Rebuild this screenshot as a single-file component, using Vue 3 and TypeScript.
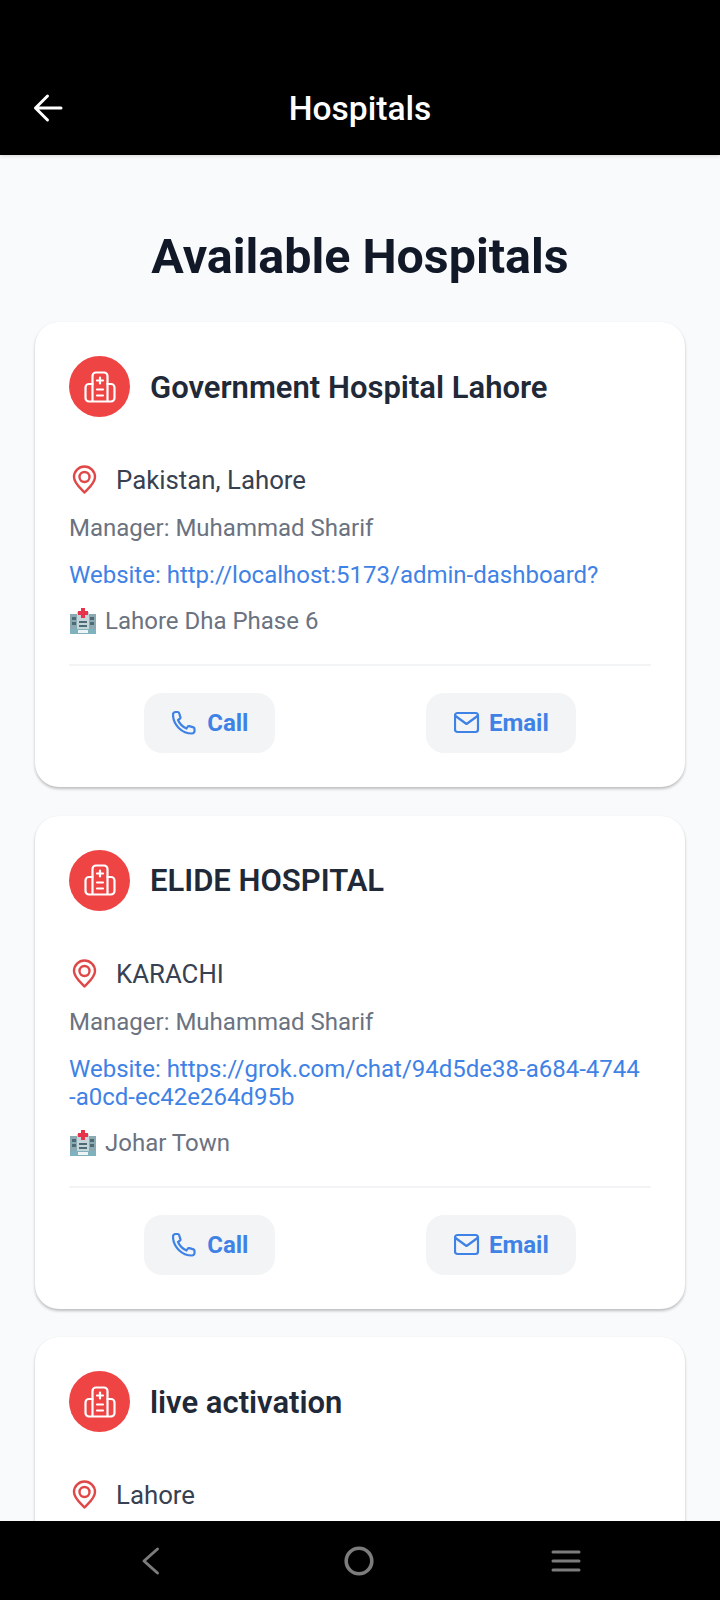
<template>
  <div class="screen">
    <header class="app-bar">
      <button class="back" aria-label="Back">
        <svg width="32" height="32" viewBox="0 0 32 32" fill="none" stroke="#fff" stroke-width="3" stroke-linecap="round" stroke-linejoin="round">
          <path d="M29 16H3.500M15.500 4 3.500 16l12 12" />
        </svg>
      </button>
      <h1 class="bar-title">Hospitals</h1>
    </header>

    <main class="content">
      <h2 class="page-title">Available Hospitals</h2>

      <article v-for="h in hospitals" :key="h.name" class="card">
        <div class="card-head">
          <div class="avatar">
            <svg width="34" height="34" viewBox="0 0 34 34" fill="none" stroke="#fff" stroke-width="2.200" stroke-linecap="round" stroke-linejoin="round">
              <path d="M9.500 31V6A3.500 3.500 0 0 1 13 2.500h8A3.500 3.500 0 0 1 24.500 6v25" />
              <path d="M9.500 14H6a3.500 3.500 0 0 0-3.500 3.500V28A3.500 3.500 0 0 0 6 31.500h22a3.500 3.500 0 0 0 3.500-3.500V17.500A3.500 3.500 0 0 0 28 14h-3.500" />
              <path d="M17 7.500v6M14 10.500h6M14 19.500h6M14 25.500h6" />
            </svg>
          </div>
          <h3 class="name">{{ h.name }}</h3>
        </div>

        <div class="location">
          <svg width="30" height="30" viewBox="0 0 30 30" fill="none" stroke="#e04848" stroke-width="2.400" stroke-linecap="round" stroke-linejoin="round">
            <path d="M26 12c0 6.500-7 11.500-10.500 15.500C12 23.500 5 18.500 5 12a10.500 10.500 0 0 1 21 0Z" />
            <circle cx="15.500" cy="12" r="5" />
          </svg>
          <span>{{ h.location }}</span>
        </div>

        <template v-if="h.manager">
          <p class="manager">Manager: {{ h.manager }}</p>
          <p class="website">Website: {{ h.website }}</p>
          <p class="address">
            <svg class="emoji" width="28" height="28" viewBox="0 0 28 28">
              <rect x="1" y="7" width="26" height="20" fill="#8aa9b2" />
              <rect x="8" y="5" width="12" height="22" fill="#c4d6da" />
              <g fill="#4e6b75">
                <rect x="3" y="10" width="4" height="3" /><rect x="3" y="15" width="4" height="3" />
                <rect x="21" y="10" width="4" height="3" /><rect x="21" y="15" width="4" height="3" />
                <rect x="10" y="14" width="8" height="2" /><rect x="10" y="18" width="8" height="2" />
              </g>
              <path d="M12 1h4v3h3v4h-3v3h-4V8H9V4h3Z" fill="#e5344b" />
              <rect x="1" y="22" width="26" height="5" fill="#7fb2bd" />
              <rect x="9" y="23" width="10" height="3" fill="#eef3f4" />
            </svg>
            {{ h.address }}
          </p>
          <div class="divider"></div>
          <div class="actions">
            <button class="action">
              <svg width="26" height="26" viewBox="0 0 26 26" fill="none" stroke="#3f82e6" stroke-width="2.200" stroke-linecap="round" stroke-linejoin="round">
                <path d="M1 4.500A2.500 2.500 0 0 1 3.500 2h2.300c.6 0 1.100.4 1.300 1l1.300 4.200c.2.600 0 1.200-.5 1.500L6 10c1.500 3.500 5 7 8.500 8.500l1.300-1.900c.3-.5.9-.7 1.500-.5l4.200 1.300c.6.200 1 .7 1 1.300v2.300a2.500 2.500 0 0 1-2.500 2.500C10 23.500 1 15 1 4.500Z" />
              </svg>
              Call
            </button>
            <button class="action">
              <svg width="26" height="26" viewBox="0 0 26 26" fill="none" stroke="#3f82e6" stroke-width="2.200" stroke-linecap="round" stroke-linejoin="round">
                <rect x="1" y="3" width="23" height="19" rx="2.500" />
                <path d="m1.500 6 11 8 11-8" />
              </svg>
              Email
            </button>
          </div>
        </template>
      </article>
    </main>

    <nav class="sys-nav">
      <svg width="24" height="30" viewBox="0 0 24 30" fill="none" stroke="#7c7c7c" stroke-width="3" stroke-linecap="round" stroke-linejoin="round"><path d="M18.500 3 5 15l13.500 12" /></svg>
      <svg class="home" width="30" height="30" viewBox="0 0 30 30" fill="none" stroke="#7c7c7c" stroke-width="3.600"><circle cx="15" cy="15" r="12.800" /></svg>
      <svg width="30" height="30" viewBox="0 0 30 30" fill="none" stroke="#7c7c7c" stroke-width="3" stroke-linecap="round"><path d="M2 6h26M2 15h26M2 24h26" /></svg>
    </nav>
  </div>
</template>

<script setup lang="ts">
interface Hospital {
  name: string
  location: string
  manager?: string
  website?: string
  address?: string
}

const hospitals: Hospital[] = [
  {
    name: 'Government Hospital Lahore',
    location: 'Pakistan, Lahore',
    manager: 'Muhammad Sharif',
    website: 'http://localhost:5173/admin-dashboard?',
    address: 'Lahore Dha Phase 6',
  },
  {
    name: 'ELIDE HOSPITAL',
    location: 'KARACHI',
    manager: 'Muhammad Sharif',
    website: 'https://grok.com/chat/94d5de38-a684-4744\n-a0cd-ec42e264d95b',
    address: 'Johar Town',
  },
  { name: 'live activation', location: 'Lahore' },
]
</script>

<style>
html, body { margin: 0; background: #000; }
</style>

<style scoped>
.screen {
  position: relative;
  width: 720px;
  height: 1600px;
  overflow: hidden;
  background: #f9fafb;
  font-family: Roboto, "Liberation Sans", sans-serif;
}

.app-bar {
  position: relative;
  height: 155px;
  background: #000;
  box-shadow: 0 1px 4px rgba(0, 0, 0, 0.15);
  display: flex;
  align-items: flex-end;
  justify-content: center;
  box-sizing: border-box;
  padding-bottom: 27px;
}

.back {
  position: absolute;
  left: 32px;
  top: 92px;
  padding: 0;
  border: 0;
  background: none;
  display: flex;
}

.bar-title {
  margin: 0;
  color: #fff;
  font-size: 33.600px;
  line-height: 38px;
  font-weight: 500;
}

.content {
  padding: 0 35px;
}

.page-title {
  margin: 75px 0 38px;
  text-align: center;
  color: #111827;
  font-size: 48.400px;
  line-height: 54px;
  font-weight: 700;
}

.card {
  background: #fff;
  border-radius: 24px;
  padding: 34px;
  margin-bottom: 28.500px;
  box-shadow: 0 2px 3px rgba(0, 0, 0, 0.24), 0 0 1px rgba(0, 0, 0, 0.06);
}

.card:last-child {
  min-height: 400px;
}

.card-head {
  display: flex;
  align-items: center;
  gap: 20px;
  margin-bottom: 48px;
}

.avatar {
  width: 61px;
  height: 61px;
  border-radius: 50%;
  background: #ef4444;
  display: flex;
  align-items: center;
  justify-content: center;
}

.name {
  margin: 2px 0 0;
  color: #1f2937;
  font-size: 31px;
  line-height: 36px;
  font-weight: 600;
}

.location {
  display: flex;
  align-items: center;
  gap: 17px;
  color: #374151;
  font-size: 25.800px;
  line-height: 30px;
  margin-bottom: 19px;
}

.manager,
.website,
.address {
  margin: 0 0 19px;
  font-size: 24px;
  line-height: 28px;
  color: #6b7280;
  white-space: pre-line;
}

.website {
  color: #3f82e6;
}

.address {
  display: flex;
  align-items: center;
  gap: 8px;
  margin: -1px 0 0;
}

.divider {
  height: 2px;
  background: #f3f4f6;
  margin: 29px 0 27px;
}

.actions {
  display: flex;
  justify-content: space-around;
}

.action {
  height: 60px;
  padding: 0 27px 0 28px;
  border: 0;
  border-radius: 18px;
  background: #f3f4f6;
  color: #3f82e6;
  font-family: inherit;
  font-size: 24px;
  font-weight: 700;
  display: flex;
  align-items: center;
  gap: 9px;
}

.sys-nav {
  position: absolute;
  left: 0;
  right: 0;
  bottom: 0;
  height: 79px;
  background: #000;
  display: flex;
  align-items: center;
  justify-content: space-between;
  padding: 0 139px;
  box-sizing: border-box;
}

.home {
  margin-left: 4px;
}
</style>
